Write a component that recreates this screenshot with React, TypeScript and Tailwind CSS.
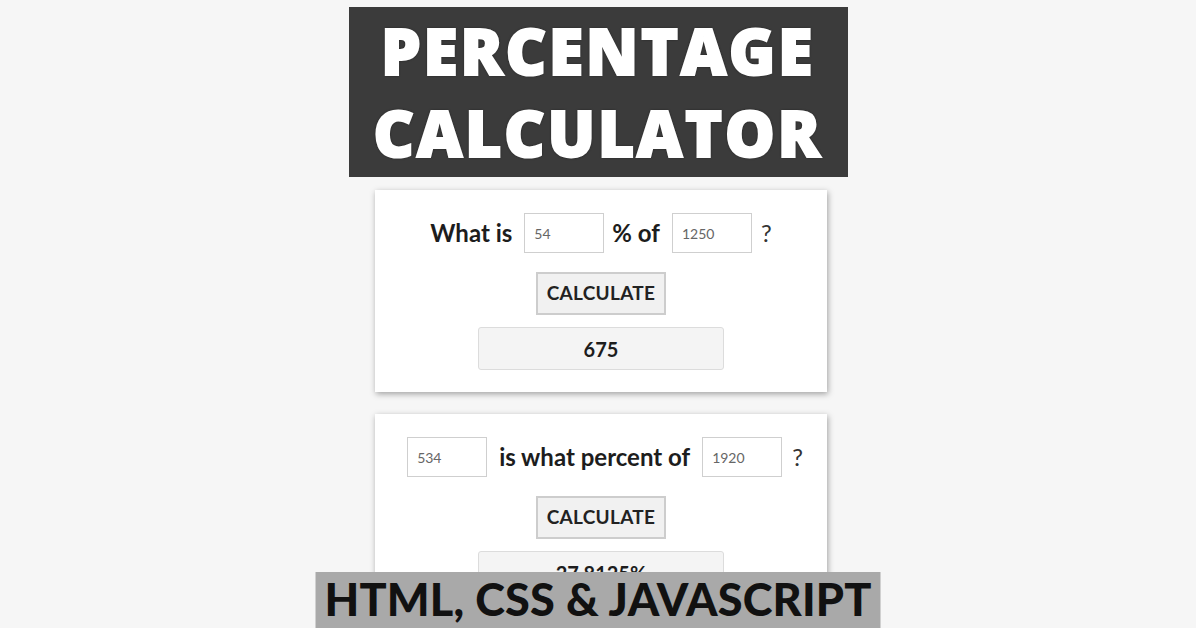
import { useState } from 'react';

const LATO = "font-['Lato','Liberation_Sans',sans-serif]";

/** One calculator card: a sentence row with two inputs, a button and a result box. */
function CalcCard({
  a,
  b,
  kind,
}: {
  a: string;
  b: string;
  kind: 'of' | 'percent';
}) {
  const [x, setX] = useState(a);
  const [y, setY] = useState(b);

  const compute = () => {
    const n1 = parseFloat(x);
    const n2 = parseFloat(y);
    if (Number.isNaN(n1) || Number.isNaN(n2)) return '';
    return kind === 'of' ? String((n1 / 100) * n2) : `${(n1 / n2) * 100}%`;
  };
  const [result, setResult] = useState(compute());

  const input = (value: string, set: (v: string) => void) => (
    <input
      value={value}
      onChange={(e) => set(e.target.value)}
      className={`${LATO} h-[40px] w-[80px] border border-[#cfcfcf] bg-white px-[9px] text-[14px] font-normal text-[#666] outline-none`}
    />
  );

  return (
    <div
      className={`${LATO} flex w-[452px] flex-col items-center bg-white pt-[23px] pb-[22px] shadow-[1px_2px_6px_rgba(0,0,0,0.35)]`}
    >
      <div className="flex items-center text-[24px] font-bold text-[#1d1d1d]">
        {kind === 'of' ? (
          <>
            <span className="mr-[12px]">What is</span>
            {input(x, setX)}
            <span className="mr-[12px] ml-[8px]">% of</span>
            {input(y, setY)}
            <span className="ml-[9px] font-normal text-[#333]">?</span>
          </>
        ) : (
          <>
            <span className="w-[8px]" />
            {input(x, setX)}
            <span className="mx-[12px]">is what percent of</span>
            {input(y, setY)}
            <span className="ml-[10px] font-normal text-[#333]">?</span>
          </>
        )}
      </div>
      <button
        type="button"
        onClick={() => setResult(compute())}
        className="mt-[19px] h-[43px] w-[130px] border-2 border-[#cdcdcd] bg-[#f1f1f1] text-[19px] font-bold tracking-[0.3px] text-[#222]"
      >
        CALCULATE
      </button>
      <div className="mt-[12px] flex h-[43px] w-[246px] items-center justify-center rounded-[3px] border border-[#dcdcdc] bg-[#f4f4f4] text-[20px] font-bold text-[#1d1d1d]">
        {result}
      </div>
    </div>
  );
}

export default function App() {
  return (
    <div className="relative flex h-[628px] w-full flex-col items-center overflow-hidden bg-[#f6f6f6]">
      <div className="mt-[7px] flex h-[170px] w-[499px] flex-col items-center justify-center bg-[#3b3b3b] font-['Open_Sans','Liberation_Sans',sans-serif] text-[63px] leading-[82px] font-extrabold tracking-[2.5px] text-white [-webkit-text-stroke:2px_white] [text-shadow:0_0_3px_rgba(0,0,0,0.9)]">
        <span>PERCENTAGE</span>
        <span>CALCULATOR</span>
      </div>

      <div className="mt-[13px] ml-[6px]">
        <CalcCard a="54" b="1250" kind="of" />
      </div>
      <div className="mt-[22px] ml-[6px]">
        <CalcCard a="534" b="1920" kind="percent" />
      </div>

      {/* footer ribbon laid over the lower card */}
      <div
        className={`${LATO} absolute bottom-0 left-1/2 flex h-[56px] w-[565px] -translate-x-1/2 items-center justify-center bg-[#a9a9a9] text-[45px] font-black tracking-[0.2px] text-[#111]`}
      >
        HTML, CSS &amp; JAVASCRIPT
      </div>
    </div>
  );
}
